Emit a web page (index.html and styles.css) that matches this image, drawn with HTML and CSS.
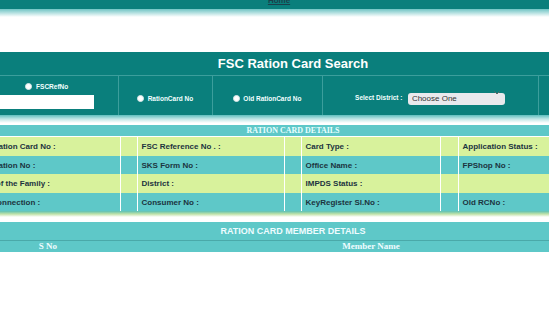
FILE: index.html
```html
<!DOCTYPE html>
<html lang="en">
<head>
  <meta charset="UTF-8">
  <title>FSC Ration Card Search</title>
  <link rel="stylesheet" href="styles.css">
</head>
<body>

<div class="topbar">
  <a href="#" class="home">Home</a>
</div>
<div class="topfade"></div>

<div class="wrap">
  <div class="title-bar">FSC Ration Card Search</div>

  <table class="search-table">
    <colgroup>
      <col style="width:148px">
      <col style="width:94px">
      <col style="width:110px">
      <col style="width:216px">
      <col style="width:78px">
    </colgroup>
    <tr>
      <td class="first">
        <label class="opt"><input type="radio" name="stype"> FSCRefNo</label>
        <input type="text" class="ref-input">
      </td>
      <td><label class="opt"><input type="radio" name="stype"> RationCard No</label></td>
      <td><label class="opt"><input type="radio" name="stype"> Old RationCard No</label></td>
      <td>
        <span class="opt">Select District :</span>
        <span class="select-wrap">
          <select class="district">
            <option>Choose One</option>
          </select>
          <svg class="chev" width="6" height="4" viewBox="0 0 6 4"><path d="M0.5 0.5 L3 3 L5.5 0.5" fill="none" stroke="#666" stroke-width="1"/></svg>
        </span>
      </td>
      <td></td>
    </tr>
  </table>
  <div class="fade"></div>

  <table class="details">
    <colgroup>
      <col style="width:150px">
      <col style="width:17px">
      <col style="width:147px">
      <col style="width:17px">
      <col style="width:139px">
      <col style="width:18px">
      <col style="width:140px">
      <col style="width:18px">
    </colgroup>
    <tr><th colspan="8" class="sect">RATION CARD DETAILS</th></tr>
    <tr class="green">
      <td>New Ration Card No :</td><td></td>
      <td>FSC Reference No . :</td><td></td>
      <td>Card Type :</td><td></td>
      <td>Application Status :</td><td></td>
    </tr>
    <tr class="teal short">
      <td>Application No :</td><td></td>
      <td>SKS Form No :</td><td></td>
      <td>Office Name :</td><td></td>
      <td>FPShop No :</td><td></td>
    </tr>
    <tr class="green">
      <td>Head of the Family :</td><td></td>
      <td>District :</td><td></td>
      <td>IMPDS Status :</td><td></td>
      <td></td><td></td>
    </tr>
    <tr class="teal short">
      <td>Gas Connection :</td><td></td>
      <td>Consumer No :</td><td></td>
      <td>KeyRegister Sl.No :</td><td></td>
      <td>Old RCNo :</td><td></td>
    </tr>
  </table>
  <div class="fade-bottom"></div>

  <table class="members">
    <colgroup>
      <col style="width:156px">
      <col style="width:490px">
    </colgroup>
    <tr><th colspan="2" class="member-title">RATION CARD MEMBER DETAILS</th></tr>
    <tr class="member-head">
      <th>S No</th>
      <th>Member Name</th>
    </tr>
  </table>
</div>

</body>
</html>
```

FILE: styles.css
```css
body {
  margin: 0;
  font-family: "Liberation Sans", Arial, sans-serif;
  background: #fff;
  overflow: hidden;
}

.topbar {
  display: flex;
  justify-content: center;
  align-items: flex-start;
  height: 9px;
  background-color: #0a7f7c;
  overflow: hidden;
}

.home {
  margin-top: -4px;
  margin-left: 9px;
  font-size: 8px;
  font-weight: bold;
  line-height: 10px;
  color: #1c3f4a;
}

.topfade {
  height: 8px;
  background: linear-gradient(#6fc4c4, #ffffff);
}

.wrap {
  margin-top: 35px;
  margin-left: -30px;
  width: 646px;
}

.title-bar {
  height: 23px;
  line-height: 23px;
  background-color: #0a7f7c;
  color: #fff;
  font-size: 13px;
  font-weight: bold;
  text-align: center;
}

table {
  border-collapse: collapse;
  table-layout: fixed;
  width: 646px;
}

.search-table {
  background-color: #0a7f7c;
  border-top: 1px solid #3c9e9c;
}

.search-table td {
  height: 39px;
  padding: 0;
  text-align: center;
  vertical-align: middle;
  border-right: 1px solid #3c9e9c;
}

.search-table td.first {
  padding-left: 6px;
}

.opt {
  font-size: 6.5px;
  font-weight: bold;
  color: #f2ffff;
  white-space: nowrap;
}

.opt input {
  -webkit-appearance: none;
  appearance: none;
  width: 7px;
  height: 7px;
  margin: 0 2px 0 0;
  border-radius: 50%;
  background: #fff;
  border: 1px solid #d8e8e8;
  vertical-align: -1px;
}

.first .opt {
  display: block;
  margin-bottom: 5px;
}

.ref-input {
  display: block;
  margin: 0 auto;
  width: 94px;
  height: 14px;
  padding: 0;
  border: none;
  background: #fff;
  box-sizing: border-box;
}

.select-wrap {
  position: relative;
  display: inline-block;
  vertical-align: middle;
  margin-left: 1px;
}

.district {
  -webkit-appearance: none;
  appearance: none;
  width: 97px;
  height: 12px;
  padding: 0 0 0 4px;
  border: none;
  border-radius: 3px;
  background: #e9e9ed;
  font-family: "Liberation Sans", Arial, sans-serif;
  font-size: 8px;
  line-height: 12px;
  color: #333;
}

.chev {
  position: absolute;
  right: 5px;
  top: 4px;
}

.fade {
  height: 8px;
  margin-bottom: 2px;
  background: linear-gradient(#5fbebe, #bfe6e6 50%, #ffffff);
}

.details td {
  padding: 0 0 0 4px;
  font-size: 8px;
  font-weight: bold;
  color: #1c3440;
  white-space: nowrap;
  overflow: hidden;
  border-right: 1px solid rgba(255, 255, 255, 0.55);
}

.sect {
  height: 11px;
  padding: 0;
  background-color: #5ec8c8;
  color: #e8ffff;
  font-family: "Liberation Serif", "Times New Roman", serif;
  font-size: 8px;
  font-weight: bold;
  line-height: 11px;
  border-bottom: 1px solid #fff;
}

.green td {
  height: 19px;
  background-color: #d8f29c;
}

.teal td {
  height: 19px;
  background-color: #5ec8c8;
}

.short td {
  height: 18px;
}

.fade-bottom {
  height: 6px;
  margin-bottom: 5px;
  background: linear-gradient(#5bbfb4, #bfe2a8 50%, #ffffff);
}

.member-title {
  height: 18px;
  padding: 0;
  background-color: #5ec8c8;
  color: #effcff;
  font-size: 9px;
  font-weight: bold;
  text-align: center;
  border-bottom: 1px solid #4aa9a9;
}

.member-head th {
  height: 11px;
  padding: 0;
  background-color: #5ec8c8;
  color: #effcff;
  font-family: "Liberation Serif", "Times New Roman", serif;
  font-size: 9px;
  font-weight: bold;
  text-align: center;
  line-height: 11px;
}
```
